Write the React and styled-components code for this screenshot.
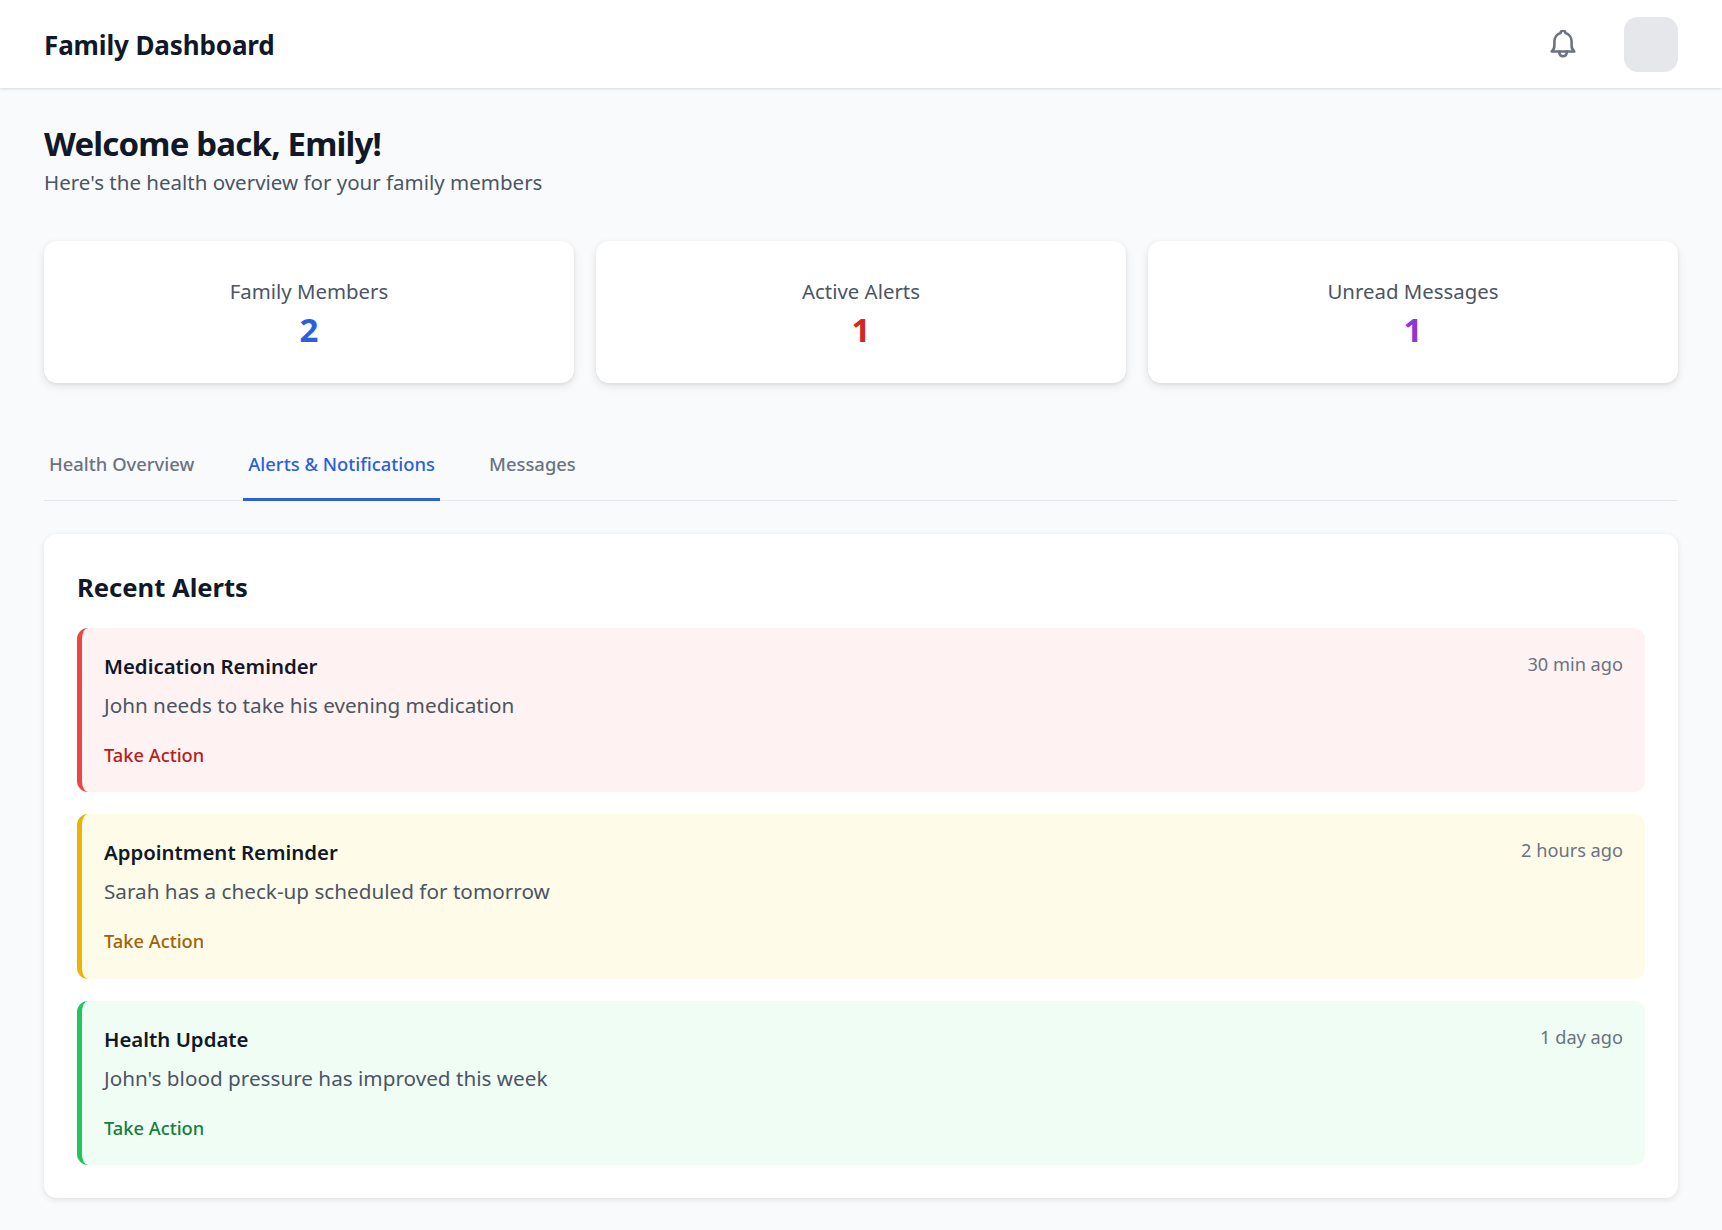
import styled, { createGlobalStyle } from "styled-components";

const GlobalStyle = createGlobalStyle`
  html, body {
    margin: 0;
    padding: 0;
    background: #f9fafb;
    font-family: "Noto Sans", "Open Sans", sans-serif;
    color: #111827;
  }
  * { box-sizing: border-box; }
`;

const Header = styled.header`
  height: 88px;
  background: #fff;
  box-shadow: 0 1px 3px rgba(0, 0, 0, 0.14);
  display: flex;
  align-items: center;
  justify-content: space-between;
  padding: 0 44px;
`;

const Brand = styled.div`
  font-size: 26px;
  font-weight: 700;
  letter-spacing: -0.13px;
  padding-top: 2px;
`;

const HeaderRight = styled.div`
  display: flex;
  align-items: center;
  gap: 48px;
`;

const Avatar = styled.div`
  width: 54px;
  height: 55px;
  border-radius: 14px;
  background: #e5e7eb;
`;

const Main = styled.main`
  padding: 36px 44px 33px;
`;

const Title = styled.h1`
  margin: 0;
  font-size: 33px;
  line-height: 40px;
  font-weight: 700;
  letter-spacing: -0.82px;
`;

const Subtitle = styled.p`
  margin: 4px 0 45px;
  font-size: 20.5px;
  line-height: 28px;
  color: #4b5563;
`;

const Stats = styled.section`
  display: grid;
  grid-template-columns: repeat(3, 1fr);
  gap: 22px;
  margin-bottom: 44px;
`;

const StatCard = styled.div`
  height: 142px;
  background: #fff;
  border-radius: 13px;
  box-shadow: 0 3px 8px rgba(0, 0, 0, 0.1), 0 1px 3px rgba(0, 0, 0, 0.06);
  display: flex;
  flex-direction: column;
  align-items: center;
  padding-top: 36px;
`;

const StatLabel = styled.div`
  font-size: 20.4px;
  line-height: 28px;
  color: #4b5563;
  margin-bottom: 5px;
`;

const StatValue = styled.div`
  font-size: 33px;
  line-height: 40px;
  font-weight: 700;
  color: ${(props) => props.color};
`;

const Tabs = styled.nav`
  display: flex;
  gap: 44px;
  height: 74px;
  border-bottom: 1px solid #e5e7eb;
  margin-bottom: 33px;
`;

const Tab = styled.div`
  height: 74px;
  padding: 2px 5px 0;
  display: flex;
  align-items: center;
  font-size: 18.4px;
  font-weight: 500;
  color: ${(props) => (props.$active ? "#2a60dd" : "#6b7280")};
  border-bottom: 3px solid ${(props) => (props.$active ? "#2a60dd" : "transparent")};
`;

const Panel = styled.section`
  background: #fff;
  border-radius: 13px;
  box-shadow: 0 2px 6px rgba(0, 0, 0, 0.1);
  padding: 37px 33px 33px;
`;

const PanelTitle = styled.h2`
  margin: 0 0 24px;
  font-size: 25.6px;
  line-height: 33px;
  font-weight: 700;
`;

const AlertList = styled.div`
  display: flex;
  flex-direction: column;
  gap: 22px;
`;

const AlertCard = styled.article`
  height: 164.3px;
  padding: 24px 22px 0;
  border-radius: 11px;
  border-left: 5.5px solid ${(props) => props.$accent};
  background: ${(props) => props.$bg};
`;

const AlertTop = styled.div`
  display: flex;
  justify-content: space-between;
  align-items: flex-start;
`;

const AlertTitle = styled.h3`
  margin: 0;
  font-size: 20.4px;
  line-height: 28px;
  font-weight: 600;
`;

const AlertTime = styled.span`
  font-size: 18.2px;
  line-height: 24px;
  color: #6b7280;
`;

const AlertText = styled.p`
  margin: 11px 0 0;
  font-size: 20.7px;
  line-height: 28px;
  color: #4b5563;
`;

const ActionButton = styled.button`
  display: block;
  margin-top: 24px;
  padding: 0;
  border: none;
  background: none;
  font-family: inherit;
  font-size: 18.3px;
  line-height: 24px;
  font-weight: 500;
  color: ${(props) => props.$color};
`;

const alerts = [
  {
    title: "Medication Reminder",
    text: "John needs to take his evening medication",
    time: "30 min ago",
    accent: "#ef4444",
    bg: "#fef2f2",
    action: "#b91c1c",
  },
  {
    title: "Appointment Reminder",
    text: "Sarah has a check-up scheduled for tomorrow",
    time: "2 hours ago",
    accent: "#eab308",
    bg: "#fefce8",
    action: "#a16207",
  },
  {
    title: "Health Update",
    text: "John's blood pressure has improved this week",
    time: "1 day ago",
    accent: "#22c55e",
    bg: "#f0fdf4",
    action: "#15803d",
  },
];

const BellIcon = () => (
  <svg width="26" height="29" viewBox="0 0 24 27" fill="none" stroke="#6b7280" strokeWidth="2.4" strokeLinecap="round" strokeLinejoin="round">
    <path d="M1.5 20h21c-1.600-1.300-2.500-3-2.500-5.500v-4c0-3.700-2.500-6.700-5.800-7.600a2.200 2.200 0 0 0-4.400 0C6.500 3.800 4 6.800 4 10.500v4c0 2.500-.9 4.200-2.500 5.500z" />
    <path d="M8.500 20v1a3.500 3.500 0 0 0 7 0v-1" />
  </svg>
);

const App = () => {
  return (
    <>
      <GlobalStyle />
      <Header>
        <Brand>Family Dashboard</Brand>
        <HeaderRight>
          <BellIcon />
          <Avatar />
        </HeaderRight>
      </Header>
      <Main>
        <Title>Welcome back, Emily!</Title>
        <Subtitle>Here's the health overview for your family members</Subtitle>
        <Stats>
          <StatCard>
            <StatLabel>Family Members</StatLabel>
            <StatValue color="#2a60dd">2</StatValue>
          </StatCard>
          <StatCard>
            <StatLabel>Active Alerts</StatLabel>
            <StatValue color="#d32626">1</StatValue>
          </StatCard>
          <StatCard>
            <StatLabel>Unread Messages</StatLabel>
            <StatValue color="#8f36d8">1</StatValue>
          </StatCard>
        </Stats>
        <Tabs>
          <Tab>Health Overview</Tab>
          <Tab $active>Alerts &amp; Notifications</Tab>
          <Tab>Messages</Tab>
        </Tabs>
        <Panel>
          <PanelTitle>Recent Alerts</PanelTitle>
          <AlertList>
            {alerts.map((alert) => (
              <AlertCard key={alert.title} $accent={alert.accent} $bg={alert.bg}>
                <AlertTop>
                  <AlertTitle>{alert.title}</AlertTitle>
                  <AlertTime>{alert.time}</AlertTime>
                </AlertTop>
                <AlertText>{alert.text}</AlertText>
                <ActionButton $color={alert.action}>Take Action</ActionButton>
              </AlertCard>
            ))}
          </AlertList>
        </Panel>
      </Main>
    </>
  );
};

export default App;
